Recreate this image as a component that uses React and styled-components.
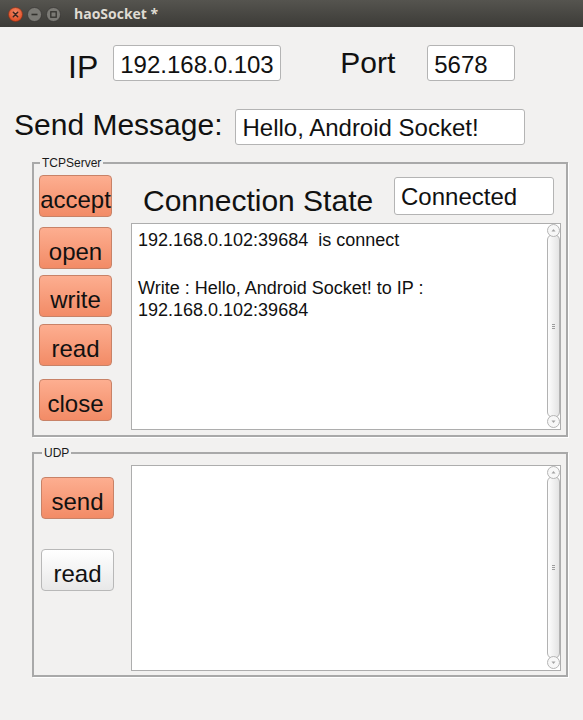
import React from 'react'
import styled, { createGlobalStyle } from 'styled-components'

const GlobalStyle = createGlobalStyle`
  html, body {
    margin: 0;
    padding: 0;
    background: #f2f1f0;
  }
  body {
    font-family: "Liberation Sans", Arial, sans-serif;
    color: #111;
  }
`

const Window = styled.div`
  width: 583px;
  height: 720px;
  background: #f2f1f0;
  overflow: hidden;
`

const TitleBar = styled.div`
  height: 27px;
  display: flex;
  align-items: center;
  padding-left: 8px;
  background: linear-gradient(#55544f, #3c3b37);
`

const WinButtons = styled.div`
  display: flex;
  gap: 4px;
  margin-top: 1px;
`

const Title = styled.span`
  margin-left: 13px;
  font-family: "Open Sans", "DejaVu Sans", sans-serif;
  font-weight: 700;
  font-size: 14px;
  color: #dfdbd2;
`

const FieldRow = styled.div`
  display: flex;
  align-items: flex-start;
  height: 36px;
  margin-top: ${p => p.$top}px;
  padding-left: ${p => p.$indent}px;
`

const BigLabel = styled.span`
  font-size: ${p => p.$size || 30}px;
  line-height: 34px;
  margin-top: ${p => p.$drop || 0}px;
  margin-left: ${p => p.$gap || 0}px;
  white-space: nowrap;
`

const Field = styled.input`
  box-sizing: border-box;
  width: ${p => p.$width}px;
  height: ${p => p.$height || 36}px;
  margin: ${p => p.$top || 0}px ${p => p.$right || 0}px 0 ${p => p.$gap || 0}px;
  padding: ${p => p.$nudge || 0}px 4px 0 6px;
  border: 1px solid #b4b4b4;
  border-radius: 3px;
  background: #fff;
  font-family: "Liberation Sans", Arial, sans-serif;
  font-size: 24px;
  color: #111;
  outline: none;
`

const Group = styled.fieldset`
  box-sizing: border-box;
  width: 536px;
  margin: ${p => p.$top}px 0 0 32px;
  padding: 5px 5px ${p => p.$bottom}px;
  border: 2px solid #a9a9a9;
  box-shadow: 1px 1px 0 #fff;
  min-width: 0;
`

const Caption = styled.legend`
  margin-left: ${p => p.$indent}px;
  padding: 0 2px;
  font-size: 12px;
  line-height: 14px;
  color: #1a1a1a;
`

const GroupBody = styled.div`
  display: flex;
  justify-content: space-between;
  align-items: flex-start;
`

const ButtonColumn = styled.div`
  display: flex;
  flex-direction: column;
  width: 73px;
  margin-left: ${p => p.$indent || 0}px;
`

const PushButton = styled.button`
  box-sizing: border-box;
  width: 73px;
  height: 42px;
  margin: ${p => p.$gap || 0}px 0 0;
  padding: 8px 0 0;
  border: 1px solid ${p => (p.$accent ? '#c88267' : '#b8b8b8')};
  border-radius: 4px;
  background: ${p =>
    p.$accent
      ? 'linear-gradient(#fdae90, #f28b66)'
      : 'linear-gradient(#ffffff, #e8e8e8)'};
  font-family: "Liberation Sans", Arial, sans-serif;
  font-size: 24px;
  line-height: 32px;
  color: #111;
  white-space: nowrap;
  overflow: visible;
`

const RightColumn = styled.div`
  display: flex;
  flex-direction: column;
  width: 430px;
`

const StateRow = styled.div`
  display: flex;
  justify-content: space-between;
  align-items: flex-start;
  height: 40px;
  margin-bottom: 8px;
`

const TextArea = styled.div`
  box-sizing: border-box;
  display: flex;
  height: ${p => p.$height}px;
  border: 1px solid #adadad;
  background: #fff;
`

const TextBody = styled.div`
  flex: 1;
  padding: 5px 4px 5px 6px;
  font-size: 18px;
  line-height: 22px;
  white-space: pre-wrap;
`

const Para = styled.div`
  min-height: 22px;
  margin-bottom: 2px;
`

const ScrollBar = styled.div`
  display: flex;
  flex-direction: column;
  align-items: center;
  width: 13px;
  padding-bottom: 1px;
`

const Thumb = styled.div`
  box-sizing: border-box;
  flex: 1;
  width: 13px;
  margin: -3px 0;
  display: flex;
  align-items: center;
  justify-content: center;
  border: 1px solid #b2b2b2;
  border-radius: 6px;
  background: linear-gradient(to right, #fdfdfd, #e4e4e4);
`

const Grip = styled.span`
  width: 3px;
  height: 5px;
  background: repeating-linear-gradient(to bottom, #9c9c9c 0 1px, transparent 1px 2px);
`

const ArrowIcon = ({ down }) => (
  <svg width="13" height="13" viewBox="0 0 13 13" style={{ position: 'relative', zIndex: 1 }}>
    <circle cx="6.5" cy="6.5" r="6" fill="#f7f7f7" stroke="#b4b4b4" />
    <path d={down ? 'M4.5 5.5 L8.5 5.5 L6.5 8 Z' : 'M4.5 7.5 L8.5 7.5 L6.5 5 Z'} fill="#a3a3a3" />
  </svg>
)

const Scroll = () => (
  <ScrollBar>
    <ArrowIcon />
    <Thumb>
      <Grip />
    </Thumb>
    <ArrowIcon down />
  </ScrollBar>
)

const CloseIcon = () => (
  <svg width="15" height="15" viewBox="0 0 15 15">
    <defs>
      <radialGradient id="closeFill" cx="50%" cy="35%" r="65%">
        <stop offset="0" stopColor="#f48a68" />
        <stop offset="1" stopColor="#df4a20" />
      </radialGradient>
    </defs>
    <circle cx="7.5" cy="7.5" r="7" fill="url(#closeFill)" stroke="#8a2e14" strokeWidth="0.6" />
    <path d="M5.3 5.3 L9.7 9.7 M9.7 5.3 L5.3 9.7" stroke="#3b2620" strokeWidth="1.5" strokeLinecap="round" />
  </svg>
)

const MinIcon = () => (
  <svg width="15" height="15" viewBox="0 0 15 15">
    <circle cx="7.5" cy="7.5" r="7" fill="#7b7a75" stroke="#2f2e2b" strokeWidth="0.6" />
    <path d="M4.5 7.5 L10.5 7.5" stroke="#33322e" strokeWidth="1.6" />
  </svg>
)

const MaxIcon = () => (
  <svg width="15" height="15" viewBox="0 0 15 15">
    <circle cx="7.5" cy="7.5" r="7" fill="#7b7a75" stroke="#2f2e2b" strokeWidth="0.6" />
    <rect x="4.8" y="4.8" width="5.4" height="5.4" fill="none" stroke="#33322e" strokeWidth="1.3" />
  </svg>
)

const App = () => {
  return (
    <Window>
      <GlobalStyle />
      <TitleBar>
        <WinButtons>
          <CloseIcon />
          <MinIcon />
          <MaxIcon />
        </WinButtons>
        <Title>haoSocket *</Title>
      </TitleBar>

      <FieldRow $top={18} $indent={68}>
        <BigLabel $size={32} $drop={5}>IP</BigLabel>
        <Field $width={168} $gap={15} $nudge={4} defaultValue="192.168.0.103" />
        <BigLabel $gap={59} $drop={1}>Port</BigLabel>
        <Field $width={88} $gap={32} $nudge={4} defaultValue="5678" />
      </FieldRow>

      <FieldRow $top={28} $indent={14}>
        <BigLabel $drop={-1}>Send Message:</BigLabel>
        <Field $width={290} $gap={13} $nudge={2} defaultValue="Hello, Android Socket!" />
      </FieldRow>

      <Group $top={11} $bottom={5}>
        <Caption $indent={1}>TCPServer</Caption>
        <GroupBody>
          <ButtonColumn>
            <PushButton $accent>accept</PushButton>
            <PushButton $accent $gap={10}>open</PushButton>
            <PushButton $accent $gap={6}>write</PushButton>
            <PushButton $accent $gap={7}>read</PushButton>
            <PushButton $accent $gap={13}>close</PushButton>
          </ButtonColumn>
          <RightColumn>
            <StateRow>
              <BigLabel $gap={12} $drop={9}>Connection State</BigLabel>
              <Field $width={160} $height={38} $top={2} $right={7} $nudge={2} defaultValue="Connected" />
            </StateRow>
            <TextArea $height={207}>
              <TextBody>
                <Para>192.168.0.102:39684  is connect</Para>
                <Para />
                <Para>Write : Hello, Android Socket! to IP : 192.168.0.102:39684</Para>
              </TextBody>
              <Scroll />
            </TextArea>
          </RightColumn>
        </GroupBody>
      </Group>

      <Group $top={9} $bottom={4}>
        <Caption $indent={3}>UDP</Caption>
        <GroupBody>
          <ButtonColumn $indent={2}>
            <PushButton $accent $gap={12}>send</PushButton>
            <PushButton $gap={30}>read</PushButton>
          </ButtonColumn>
          <RightColumn>
            <TextArea $height={206}>
              <TextBody />
              <Scroll />
            </TextArea>
          </RightColumn>
        </GroupBody>
      </Group>
    </Window>
  )
}

export default App
